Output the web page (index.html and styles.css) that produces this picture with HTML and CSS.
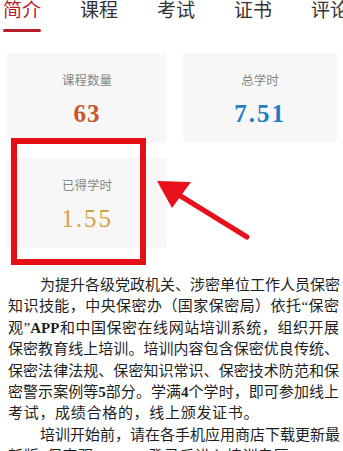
FILE: index.html
```html
<!DOCTYPE html>
<html lang="zh-CN">
<head>
<meta charset="utf-8">
<link rel="stylesheet" href="styles.css">
</head>
<body>
<div class="page">
  <nav class="tabs">
    <div class="tab active">简介</div>
    <div class="tab">课程</div>
    <div class="tab">考试</div>
    <div class="tab">证书</div>
    <div class="tab">评论</div>
  </nav>
  <div class="stats">
    <div class="card">
      <div class="label">课程数量</div>
      <div class="num orange">63</div>
    </div>
    <div class="card">
      <div class="label">总学时</div>
      <div class="num blue">7.51</div>
    </div>
    <div class="card">
      <div class="label">已得学时</div>
      <div class="num gold">1.55</div>
    </div>
  </div>
  <div class="intro">
    <p>
      <span class="ln first">为提升各级党政机关、涉密单位工作人员保密</span>
      <span class="ln">知识技能，中央保密办（国家保密局）依托<span class="lat">“</span>保密</span>
      <span class="ln">观<span class="lat">”</span><span class="lat b">APP</span>和中国保密在线网站培训系统，组织开展</span>
      <span class="ln">保密教育线上培训。培训内容包含保密优良传统、</span>
      <span class="ln">保密法律法规、保密知识常识、保密技术防范和保</span>
      <span class="ln">密警示案例等<span class="lat b">5</span>部分。学满<span class="lat b">4</span>个学时，即可参加线上</span>
      <span class="ln end">考试，成绩合格的，线上颁发证书。</span>
    </p>
    <p>
      <span class="ln first">培训开始前，请在各手机应用商店下载更新最</span>
      <span class="ln end">新版<span class="lat">“</span>保密观<span class="lat">”</span><span class="lat b">APP</span>，登录后进入培训专区。</span>
    </p>
  </div>
  <div class="highlight"></div>
  <svg class="arrow" width="100" height="70" viewBox="150 175 100 70">
    <line x1="247" y1="237" x2="166" y2="187" stroke="#e8101a" stroke-width="5" stroke-linecap="round"/>
    <polygon points="157,181 191,182 172,208" fill="#e8101a"/>
  </svg>
</div>
</body>
</html>
```
FILE: styles.css
```css
html, body {
  margin: 0;
  padding: 0;
  background: #ffffff;
}
.page {
  position: relative;
  width: 343px;
  height: 451px;
  overflow: hidden;
  font-family: "Noto Sans CJK SC", "Liberation Serif", serif;
}
.tabs {
  display: flex;
  gap: 39px;
  padding-left: 3px;
  margin-top: -2px;
  height: 34px;
}
.tab {
  width: 38px;
  flex: none;
  font-size: 19px;
  line-height: 22px;
  color: #333333;
  white-space: nowrap;
  position: relative;
}
.tab.active {
  color: #b51f2c;
}
.tab.active::after {
  content: "";
  position: absolute;
  left: 0;
  top: 31px;
  width: 38px;
  height: 3px;
  border-radius: 2px;
  background: #b51f2c;
}
.stats {
  display: grid;
  grid-template-columns: 160px 154px;
  column-gap: 16px;
  row-gap: 15px;
  padding-left: 7px;
  margin-top: 21px;
}
.card {
  background: #f7f7f7;
  height: 90px;
  border-radius: 3px;
  display: flex;
  flex-direction: column;
  align-items: center;
  padding-top: 19px;
  box-sizing: border-box;
}
.label {
  font-size: 12.5px;
  line-height: 16px;
  color: #868686;
}
.num {
  font-family: "Liberation Serif", serif;
  font-size: 25px;
  line-height: 28px;
  margin-top: 12px;
  letter-spacing: 1px;
}
.orange { color: #cc5428; font-weight: bold; }
.blue { color: #1f7fc2; font-weight: bold; letter-spacing: 2px; }
.gold { color: #d8a045; letter-spacing: 2px; }
.intro {
  margin-top: 25px;
  padding: 0 4px 0 8px;
  font-size: 15px;
  color: #1e1e1e;
}
.intro p {
  margin: 0;
}
.ln {
  display: block;
  height: 21.4px;
  line-height: 21.4px;
  white-space: nowrap;
  text-align: justify;
  text-align-last: justify;
}
.ln.first {
  padding-left: 32px;
}
.ln.end {
  text-align-last: left;
  letter-spacing: 0.7px;
}
.lat {
  font-family: "Liberation Serif", serif;
  line-height: 1;
}
.lat.b {
  font-weight: bold;
}
.highlight {
  position: absolute;
  left: 11px;
  top: 138px;
  width: 123px;
  height: 115px;
  border: 6px solid #e50f16;
}
.arrow {
  position: absolute;
  left: 150px;
  top: 175px;
}
```
